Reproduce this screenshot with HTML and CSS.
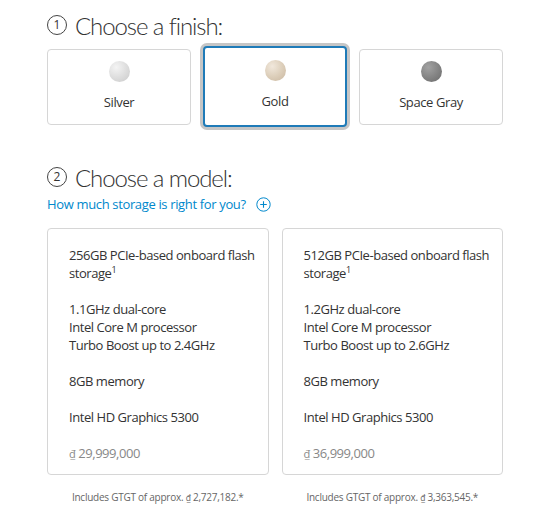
FILE: index.html
```html
<!DOCTYPE html>
<html lang="en">
<head>
<meta charset="utf-8">
<title>Choose a finish</title>
<link rel="stylesheet" href="styles.css">
</head>
<body>
<main class="page">
  <section class="step">
    <h2 class="step-title"><span class="step-num">1</span>Choose a finish:</h2>
    <div class="finishes">
      <div class="finish">
        <span class="swatch swatch-silver"></span>
        <span class="finish-name">Silver</span>
      </div>
      <div class="finish selected">
        <span class="swatch swatch-gold"></span>
        <span class="finish-name">Gold</span>
      </div>
      <div class="finish">
        <span class="swatch swatch-gray"></span>
        <span class="finish-name">Space Gray</span>
      </div>
    </div>
  </section>

  <section class="step step-model">
    <h2 class="step-title"><span class="step-num">2</span>Choose a model:</h2>
    <a class="help-link" href="#">How much storage is right for you?
      <svg class="plus" width="15" height="15" viewBox="0 0 15 15" aria-hidden="true">
        <circle cx="7.5" cy="7.5" r="6.7" fill="none" stroke="#0088cc" stroke-width="1"/>
        <path d="M7.5 4.2v6.6M4.2 7.5h6.6" stroke="#0088cc" stroke-width="1.1" fill="none"/>
      </svg>
    </a>
    <div class="models">
      <div class="model">
        <div class="model-card">
          <p>256GB PCIe-based onboard flash storage<sup>1</sup></p>
          <p>1.1GHz dual-core<br>Intel Core M processor<br>Turbo Boost up to 2.4GHz</p>
          <p>8GB memory</p>
          <p>Intel HD Graphics 5300</p>
          <p class="price"><span class="dong">₫</span> 29,999,000</p>
        </div>
        <p class="tax">Includes GTGT of approx. <span class="dong">₫</span> 2,727,182.*</p>
      </div>
      <div class="model">
        <div class="model-card">
          <p>512GB PCIe-based onboard flash storage<sup>1</sup></p>
          <p>1.2GHz dual-core<br>Intel Core M processor<br>Turbo Boost up to 2.6GHz</p>
          <p>8GB memory</p>
          <p>Intel HD Graphics 5300</p>
          <p class="price"><span class="dong">₫</span> 36,999,000</p>
        </div>
        <p class="tax">Includes GTGT of approx. <span class="dong">₫</span> 3,363,545.*</p>
      </div>
    </div>
  </section>
</main>
</body>
</html>
```

FILE: styles.css
```css
* { box-sizing: border-box; }

html, body {
  margin: 0;
  background: #fff;
}

body {
  font-family: "Open Sans", "Liberation Sans", sans-serif;
  color: #333;
}

.page {
  width: 456px;
  margin-left: 47px;
  padding-top: 10px;
}

.step-title {
  display: flex;
  align-items: center;
  margin: 0;
  height: 30px;
  font-family: "Lato", "Open Sans", sans-serif;
  font-size: 24px;
  font-weight: 300;
  letter-spacing: -1.1px;
  color: #333;
}

.step-num {
  display: inline-flex;
  align-items: center;
  justify-content: center;
  width: 20px;
  height: 20px;
  margin-right: 8px;
  border: 1px solid #444;
  border-radius: 50%;
  font-family: "Open Sans", sans-serif;
  font-size: 12px;
  font-weight: 400;
  letter-spacing: 0;
  line-height: 1;
}

.finishes {
  display: grid;
  grid-template-columns: repeat(3, 1fr);
  column-gap: 12px;
  margin-top: 9px;
  height: 76px;
}

.finish {
  display: flex;
  flex-direction: column;
  align-items: center;
  border: 1px solid #d6d6d6;
  border-radius: 4px;
  background: #fff;
  padding-top: 11px;
}

.finish.selected {
  border: 2px solid #1f7bb8;
  box-shadow: 0 0 0 3px #c6c6c6;
  margin: -3px 0 -2px;
  padding-top: 12px;
}

.swatch {
  width: 21px;
  height: 21px;
  border-radius: 50%;
}

.swatch-silver {
  background: radial-gradient(circle at 35% 30%, #f4f4f4 0%, #dedede 50%, #c9c9c9 100%);
}

.swatch-gold {
  background: radial-gradient(circle at 35% 30%, #f1e8dc 0%, #ddcfbb 50%, #c9b79f 100%);
}

.swatch-gray {
  background: radial-gradient(circle at 35% 30%, #a2a2a2 0%, #858585 50%, #6a6a6a 100%);
}

.finish-name {
  margin-top: 11px;
  font-size: 13px;
  line-height: 18px;
  letter-spacing: -0.4px;
  color: #333;
}

.step-model {
  margin-top: 37px;
}

.help-link {
  display: inline-flex;
  align-items: center;
  margin-top: 2px;
  font-size: 13px;
  line-height: 18px;
  letter-spacing: -0.35px;
  color: #0088cc;
  text-decoration: none;
}

.plus {
  margin-left: 10px;
}

.models {
  display: grid;
  grid-template-columns: 1fr 1fr;
  column-gap: 13px;
  margin-top: 14px;
}

.model-card {
  border: 1px solid #d6d6d6;
  border-radius: 4px;
  padding: 17px 4px 13px 21px;
  height: 247px;
}

.model-card p {
  margin: 0 0 18px;
  font-size: 13px;
  line-height: 18px;
  letter-spacing: -0.45px;
  color: #333;
}

.model-card p:first-child {
  padding-right: 8px;
}

.model-card p.price {
  margin-bottom: 0;
  color: #888;
}

.dong {
  font-size: 0.85em;
}

.model-card sup {
  font-size: 9px;
  line-height: 9px;
  vertical-align: 5px;
}

.tax {
  margin: 15px 0 0;
  text-align: center;
  font-size: 10px;
  line-height: 14px;
  letter-spacing: -0.25px;
  color: #666;
}
```
